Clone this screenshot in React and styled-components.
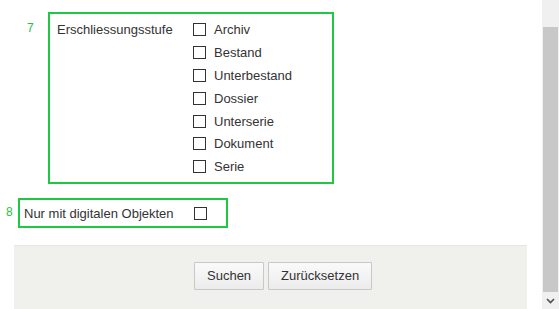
import React from 'react'
import styled, { createGlobalStyle } from 'styled-components'

const GlobalStyle = createGlobalStyle`
  html, body {
    margin: 0;
    padding: 0;
    background: #fff;
    overflow: hidden;
  }
  body {
    font-family: "Liberation Sans", Arial, sans-serif;
    font-size: 13px;
    color: #333;
  }
`

const LEVELS = ['Archiv', 'Bestand', 'Unterbestand', 'Dossier', 'Unterserie', 'Dokument', 'Serie']

const Page = styled.div`
  display: flex;
  width: 559px;
  height: 309px;
`
const Main = styled.div`
  width: 542px;
  display: flex;
  flex-direction: column;
`
const Row = styled.div`
  display: flex;
  align-items: flex-start;
  margin-top: ${p => p.$top}px;
`
const Num = styled.div`
  width: ${p => p.$width}px;
  padding-top: ${p => p.$pad}px;
  font-size: 12px;
  line-height: 14px;
  color: #2ebd4a;
  padding-left: ${p => p.$left}px;
  box-sizing: border-box;
`
const Fieldset = styled.div`
  box-sizing: border-box;
  width: ${p => p.$width}px;
  height: ${p => p.$height}px;
  border: 2px solid #1ec841;
  display: flex;
  align-items: flex-start;
  padding: ${p => p.$padding};
`
const Label = styled.div`
  width: ${p => p.$width}px;
  line-height: 23px;
  flex-shrink: 0;
`
const List = styled.div`
  display: flex;
  flex-direction: column;
`
const Option = styled.label`
  display: flex;
  align-items: center;
  height: ${p => p.$height || 23}px;
  line-height: 23px;
`
const Box = styled.span`
  width: 11px;
  height: 11px;
  border: 1px solid #333;
  background: #fff;
  margin-right: 8px;
  flex-shrink: 0;
`
const Footer = styled.div`
  margin: auto 15px 0 14px;
  height: 64px;
  background: #f0f0ec;
  border-top: 1px solid #e6e6e2;
  box-sizing: border-box;
  display: flex;
  align-items: center;
  gap: 4px;
  padding: 0 0 4px 180px;
`
const Button = styled.button`
  height: 28px;
  padding: 0 12px;
  font-family: "Liberation Sans", Arial, sans-serif;
  font-size: 13px;
  color: #333;
  border: 1px solid #c8c8c8;
  border-radius: 1px;
  background: linear-gradient(#fafafa, #ececec);
  cursor: pointer;
`
const Scrollbar = styled.div`
  width: 17px;
  background: #f0f0f0;
  display: flex;
  flex-direction: column;
  padding-top: 27px;
  box-sizing: border-box;
`
const Thumb = styled.div`
  flex: 1;
  margin-right: 1px;
  margin-left: 1px;
  background: #c8c8c8;
`
const Arrow = styled.div`
  height: 17px;
  display: flex;
  align-items: center;
  justify-content: center;
`

export default function App() {
  return (
    <Page>
      <GlobalStyle />
      <Main>
        <Row $top={12}>
          <Num $width={48} $left={27} $pad={9}>7</Num>
          <Fieldset $width={286} $height={172} $padding="4px 0 0 7px">
            <Label $width={136}>Erschliessungsstufe</Label>
            <List>
              {LEVELS.map(level => (
                <Option key={level} $height={22.9}>
                  <Box />
                  {level}
                </Option>
              ))}
            </List>
          </Fieldset>
        </Row>
        <Row $top={14}>
          <Num $width={18} $left={6} $pad={7}>8</Num>
          <Fieldset $width={210} $height={30} $padding="2px 0 0 4px">
            <Label $width={170}>Nur mit digitalen Objekten</Label>
            <Option>
              <Box />
            </Option>
          </Fieldset>
        </Row>
        <Footer>
          <Button>Suchen</Button>
          <Button>Zurücksetzen</Button>
        </Footer>
      </Main>
      <Scrollbar>
        <Thumb />
        <Arrow>
          <svg width="9" height="6" viewBox="0 0 9 6">
            <path d="M1 1 L4.5 4.5 L8 1" fill="none" stroke="#505050" strokeWidth="1.6" />
          </svg>
        </Arrow>
      </Scrollbar>
    </Page>
  )
}
